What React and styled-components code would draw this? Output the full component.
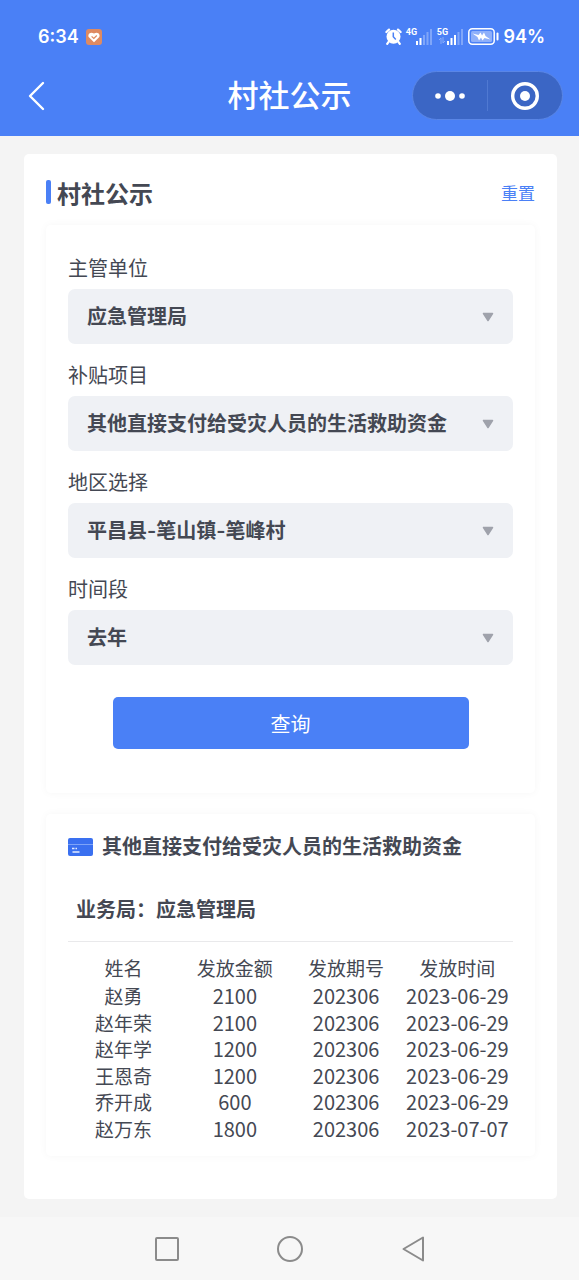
import { useState } from "react";
import styled, { createGlobalStyle } from "styled-components";

const GlobalStyle = createGlobalStyle`
  :root {
    --color-brand: #4a80f6;
    --color-text: #444853;
    --color-field: #eff1f5;
  }

  * {
    box-sizing: border-box;
    margin: 0;
    padding: 0;
  }

  body {
    background-color: #f4f4f4;
    color: var(--color-text);
    font-family: Inter, "Noto Sans CJK SC", sans-serif;
    font-size: 20px;
  }

  button,
  select {
    border: none;
    background: none;
    color: inherit;
    font: inherit;
    cursor: pointer;
  }

  svg {
    display: block;
  }
`;

const Page = styled.div`
  display: flex;
  flex-direction: column;
  min-height: 100vh;
`;

const Header = styled.header`
  background-color: var(--color-brand);
  color: #fff;
  padding-bottom: 16px;
`;

const StatusBar = styled.div`
  display: flex;
  justify-content: space-between;
  align-items: center;
  height: 71px;
  padding: 2px 34px 0 38px;
  font-size: 18px;
  font-weight: 600;
`;

const StatusGroup = styled.div`
  display: flex;
  align-items: center;
  gap: ${(props) => props.$gap}px;
`;

const SignalDiv = styled.div`
  display: flex;
  align-items: flex-start;
`;

const SignalLabel = styled.div`
  display: flex;
  flex-direction: column;
  align-items: center;
  width: 10px;
  font-family: Roboto, sans-serif;
  font-size: 9px;
  font-weight: 700;
  line-height: 9px;
`;

const NavBar = styled.nav`
  display: grid;
  grid-template-columns: 1fr auto 1fr;
  align-items: center;
  padding: 0 16px;
`;

const IconButton = styled.button`
  display: flex;
  align-items: center;
  justify-content: center;
  width: ${(props) => props.$width || 28}px;
  height: 40px;
`;

const PageTitle = styled.h1`
  font-size: 31px;
  font-weight: 500;
  line-height: 49px;
`;

const Capsule = styled.div`
  display: flex;
  justify-self: end;
  align-items: center;
  width: 151px;
  height: 49px;
  border: 1px solid #5a86e6;
  border-radius: 25px;
  background-color: #3b66c5;
`;

const CapsuleButton = styled.button`
  display: flex;
  flex: 1;
  align-items: center;
  justify-content: center;
  height: 100%;
`;

const CapsuleLine = styled.span`
  width: 1px;
  height: 31px;
  background-color: #5079d2;
`;

const Main = styled.main`
  flex: 1;
  padding: 18px 22px 18px 24px;
`;

const Panel = styled.section`
  display: flex;
  flex-direction: column;
  padding: 18px 22px 43px;
  border-radius: 5px;
  background-color: #fff;
`;

const PanelHeading = styled.div`
  display: flex;
  align-items: center;
  justify-content: space-between;
  height: 40px;
  margin-bottom: 13px;
`;

const PanelTitle = styled.h2`
  display: flex;
  align-items: center;
  gap: 6px;
  font-size: 24px;
  font-weight: 600;

  &::before {
    content: "";
    width: 5px;
    height: 24px;
    border-radius: 2px;
    background-color: var(--color-brand);
  }
`;

const ResetButton = styled.button`
  color: var(--color-brand);
  font-size: 17px;
`;

const cardShadow = "0 0 8px rgba(0, 0, 0, 0.04)";

const Form = styled.form`
  display: flex;
  flex-direction: column;
  gap: 16px;
  padding: 28px 22px 44px;
  border-radius: 5px;
  box-shadow: ${cardShadow};
`;

const Field = styled.div`
  display: flex;
  flex-direction: column;
`;

const Label = styled.label`
  line-height: 32px;
  padding-bottom: 4px;
`;

const SelectWrap = styled.div`
  display: grid;
  align-items: center;
  border-radius: 7px;
  background-color: var(--color-field);

  & > * {
    grid-area: 1 / 1;
  }
`;

const Select = styled.select`
  appearance: none;
  width: 100%;
  height: 55px;
  padding: 1px 40px 0 19px;
  font-weight: 600;
`;

const Arrow = styled.svg`
  justify-self: end;
  margin-right: 19px;
  pointer-events: none;
`;

const SubmitButton = styled.button`
  align-self: center;
  width: 80%;
  height: 52px;
  margin-top: 16px;
  border-radius: 5px;
  background-color: var(--color-brand);
  color: #fff;
`;

const ResultCard = styled.article`
  margin-top: 21px;
  padding: 17px 22px 14px;
  border-radius: 5px;
  box-shadow: ${cardShadow};
`;

const ResultTitle = styled.h3`
  display: flex;
  align-items: center;
  gap: 9px;
  font-size: 20px;
  font-weight: 600;
  line-height: 32px;
`;

const Bureau = styled.p`
  padding: 31px 8px 15px;
  border-bottom: 1px solid #e9e9eb;
  font-weight: 600;
  line-height: 32px;
`;

const Table = styled.table`
  width: 100%;
  height: 185px;
  margin-top: 15px;
  border-collapse: collapse;
  table-layout: fixed;
  text-align: center;
  font-size: 19px;
  line-height: 26px;
  white-space: nowrap;
`;

const Th = styled.th`
  font-weight: 400;
`;

const Td = styled.td`
  font-family: "Noto Sans CJK SC", sans-serif;
  font-size: ${(props) => (props.$numeric ? 20 : 19)}px;
`;

const SystemBar = styled.footer`
  display: flex;
  align-items: center;
  justify-content: center;
  gap: 95px;
  height: 63px;
  background-color: #f7f7f7;
`;

const fields = [
  { id: "unit", label: "主管单位", value: "应急管理局" },
  { id: "project", label: "补贴项目", value: "其他直接支付给受灾人员的生活救助资金" },
  { id: "region", label: "地区选择", value: "平昌县-笔山镇-笔峰村" },
  { id: "period", label: "时间段", value: "去年" },
];

const columns = ["姓名", "发放金额", "发放期号", "发放时间"];

const rows = [
  ["赵勇", "2100", "202306", "2023-06-29"],
  ["赵年荣", "2100", "202306", "2023-06-29"],
  ["赵年学", "1200", "202306", "2023-06-29"],
  ["王恩奇", "1200", "202306", "2023-06-29"],
  ["乔开成", "600", "202306", "2023-06-29"],
  ["赵万东", "1800", "202306", "2023-07-07"],
];

function HealthIcon() {
  return (
    <svg width="16" height="16" viewBox="0 0 16 16">
      <rect width="16" height="16" rx="3" fill="#de8a62" />
      <path
        d="M8 13.2 3.2 8.6C.9 6 3.9 1.7 8 4.6 12.1 1.7 15.1 6 12.8 8.6Z"
        fill="#fff"
      />
      <path
        d="m5.6 7.4 2.2 2.1 3-3"
        fill="none"
        stroke="#de8a62"
        strokeWidth="1.2"
      />
    </svg>
  );
}

function AlarmIcon() {
  return (
    <svg width="17" height="17" viewBox="0 0 17 17" fill="none" stroke="#fff">
      <circle cx="8.5" cy="8.7" r="7" fill="#fff" stroke="none" />
      <path
        d="M1.4 4 4 1.6M15.6 4 13 1.6M3.6 13.8l-1.4 2M13.4 13.8l1.4 2"
        strokeWidth="2.2"
        strokeLinecap="round"
      />
      <path d="M8.3 4.5v4.3l2.5 2.6" stroke="#4a80f6" strokeWidth="1.5" />
    </svg>
  );
}

function Signal({ label, level, activity }) {
  return (
    <SignalDiv>
      <SignalLabel>
        {label}
        {activity && (
          <svg width="8" height="7" viewBox="0 0 8 7" fill="none" stroke="#fff" opacity="0.35">
            <path d="M3 7V1L1 3M5 0v6l2-2" />
          </svg>
        )}
      </SignalLabel>
      <svg width="17" height="17" viewBox="0 0 17 17" fill="#fff">
        {[4, 7, 10, 13, 16].map((height, i) => (
          <rect
            key={height}
            x={i * 3.5}
            y={17 - height}
            width="2"
            height={height}
            opacity={i < level ? 1 : 0.3}
          />
        ))}
      </svg>
    </SignalDiv>
  );
}

function BatteryIcon() {
  return (
    <svg width="31" height="17" viewBox="0 0 31 17">
      <rect
        x="0.8"
        y="0.8"
        width="25.4"
        height="15.4"
        rx="3.5"
        fill="none"
        stroke="#fff"
        strokeWidth="1.5"
      />
      <rect x="3" y="3" width="21" height="11" rx="1.5" fill="#8fb0fa" />
      <path
        d="m4.5 5.5 6 1.5 2-2.5 1.5 3 2-3 1.5 3.5 5 3.5-6-1.5-2 2.5-1.5-3-2 3-1.5-3.5Z"
        fill="#fff"
      />
      <rect x="28.5" y="4.5" width="2" height="8" rx="1" fill="#fff" />
    </svg>
  );
}

function CardIcon() {
  return (
    <svg width="25" height="18" viewBox="0 0 25 18">
      <rect width="25" height="18" rx="2" fill="#3a70f0" />
      <path d="M0 6.5h25" stroke="#7ea4f8" />
      <path d="M4 10.5h2.500M7.500 10.500h1.500M4.500 14h7" stroke="#e4ecff" strokeWidth="1.4" />
    </svg>
  );
}

function SelectField({ id, label, value }) {
  return (
    <Field>
      <Label htmlFor={id}>{label}</Label>
      <SelectWrap>
        <Select id={id} name={id}>
          <option>{value}</option>
        </Select>
        <Arrow width="12" height="10" viewBox="0 0 12 10">
          <path
            d="M1.5 1.5h9L6 8.5Z"
            fill="#9fa2ab"
            stroke="#9fa2ab"
            strokeWidth="1.5"
            strokeLinejoin="round"
          />
        </Arrow>
      </SelectWrap>
    </Field>
  );
}

function App() {
  const [formKey, setFormKey] = useState(0);

  return (
    <Page>
      <GlobalStyle />
      <Header>
        <StatusBar>
          <StatusGroup $gap={7}>
            <span>6:34</span>
            <HealthIcon />
          </StatusGroup>
          <StatusGroup $gap={4}>
            <AlarmIcon />
            <Signal label="4G" level={2} />
            <Signal label="5G" level={3} activity />
            <BatteryIcon />
            <span>94%</span>
          </StatusGroup>
        </StatusBar>
        <NavBar>
          <IconButton $width={40} aria-label="返回">
            <svg width="18" height="30" viewBox="0 0 18 30">
              <path
                d="M16 2 3 15l13 13"
                fill="none"
                stroke="#fff"
                strokeWidth="2.4"
                strokeLinecap="round"
                strokeLinejoin="round"
              />
            </svg>
          </IconButton>
          <PageTitle>村社公示</PageTitle>
          <Capsule>
            <CapsuleButton aria-label="更多">
              <svg width="32" height="12" viewBox="0 0 32 12" fill="#fff">
                <circle cx="4" cy="6" r="2.8" />
                <circle cx="16" cy="6" r="5" />
                <circle cx="28" cy="6" r="2.8" />
              </svg>
            </CapsuleButton>
            <CapsuleLine />
            <CapsuleButton aria-label="关闭">
              <svg width="30" height="30" viewBox="0 0 30 30">
                <circle cx="15" cy="15" r="12.3" fill="none" stroke="#fff" strokeWidth="3.4" />
                <circle cx="15" cy="15" r="5" fill="#fff" />
              </svg>
            </CapsuleButton>
          </Capsule>
        </NavBar>
      </Header>

      <Main>
        <Panel>
          <PanelHeading>
            <PanelTitle>村社公示</PanelTitle>
            <ResetButton type="button" onClick={() => setFormKey(formKey + 1)}>
              重置
            </ResetButton>
          </PanelHeading>

          <Form key={formKey} onSubmit={(e) => e.preventDefault()}>
            {fields.map((field) => (
              <SelectField key={field.id} {...field} />
            ))}
            <SubmitButton>查询</SubmitButton>
          </Form>

          <ResultCard>
            <ResultTitle>
              <CardIcon />
              其他直接支付给受灾人员的生活救助资金
            </ResultTitle>
            <Bureau>业务局：应急管理局</Bureau>
            <Table>
              <thead>
                <tr>
                  {columns.map((column) => (
                    <Th key={column} scope="col">
                      {column}
                    </Th>
                  ))}
                </tr>
              </thead>
              <tbody>
                {rows.map((row) => (
                  <tr key={row[0]}>
                    {row.map((cell, i) => (
                      <Td key={i} $numeric={i > 0}>
                        {cell}
                      </Td>
                    ))}
                  </tr>
                ))}
              </tbody>
            </Table>
          </ResultCard>
        </Panel>
      </Main>

      <SystemBar>
        <IconButton aria-label="最近任务">
          <svg width="26" height="26" viewBox="0 0 26 26" fill="none" stroke="#8b8b8b">
            <rect x="2" y="2" width="22" height="22" rx="1" strokeWidth="2" />
          </svg>
        </IconButton>
        <IconButton aria-label="主屏幕">
          <svg width="28" height="28" viewBox="0 0 28 28" fill="none" stroke="#8b8b8b">
            <circle cx="14" cy="14" r="12" strokeWidth="2" />
          </svg>
        </IconButton>
        <IconButton aria-label="后退">
          <svg width="26" height="28" viewBox="0 0 26 28" fill="none" stroke="#8b8b8b">
            <path d="M23 2.5v23L3.5 14Z" strokeWidth="2" strokeLinejoin="round" />
          </svg>
        </IconButton>
      </SystemBar>
    </Page>
  );
}

export default App;
